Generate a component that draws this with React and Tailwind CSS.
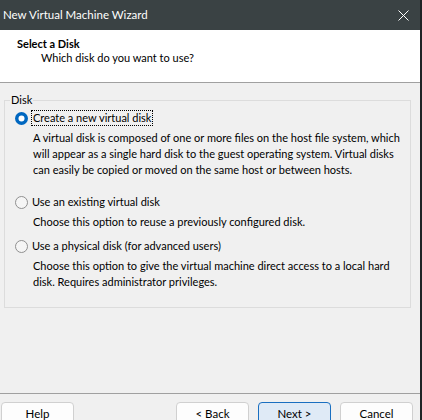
import React from 'react';

const font = { fontFamily: 'Lato, "Liberation Sans", sans-serif' };

function Radio({ checked }) {
    return (
        <svg width="13" height="13" viewBox="0 0 13 13" className="shrink-0">
            {checked ? (
                <>
                    <circle cx="6.5" cy="6.5" r="6.5" fill="#0067c0" />
                    <circle cx="6.5" cy="6.5" r="3" fill="#ffffff" />
                </>
            ) : (
                <circle cx="6.5" cy="6.5" r="6" fill="#f5f5f5" stroke="#8f8f8f" strokeWidth="1" />
            )}
        </svg>
    );
}

function Option({ label, checked, lines, className }) {
    return (
        <div className={className}>
            <div className="flex items-center h-[16px]">
                <Radio checked={checked} />
                <span
                    className={
                        checked
                            ? 'ml-[3px] px-[1px] leading-[14px] border border-dotted border-black'
                            : 'ml-[4px] leading-[16px]'
                    }
                >
                    {label}
                </span>
            </div>
            <div className="mt-[4px] ml-[18px] leading-[16px] whitespace-nowrap">
                {lines.map((l) => (
                    <div key={l}>{l}</div>
                ))}
            </div>
        </div>
    );
}

function Button({ children, primary }) {
    return (
        <button
            className={
                'w-[73px] h-[24px] rounded-[4px] border text-[11.5px] text-black flex items-center justify-center ' +
                (primary ? 'border-[#1a6fc0] bg-[#dfeaf6]' : 'border-[#d0d0d0] bg-[#fdfdfd]')
            }
        >
            {children}
        </button>
    );
}

export default function App() {
    return (
        <div className="w-[422px] h-[420px] bg-[#1f2325] overflow-hidden text-[11px] text-black" style={font}>
            <div className="w-[420px] h-[420px] flex flex-col bg-[#f0f0f0]">
                {/* Title bar */}
                <div className="h-[30px] bg-[#3a4244] flex items-center justify-between pl-[3px] pr-[11px] text-[11.5px] text-white">
                    <span>New Virtual Machine Wizard</span>
                    <svg width="11" height="11" viewBox="0 0 11 11">
                        <path d="M0.5 0.5 L10.5 10.5 M10.5 0.5 L0.5 10.5" stroke="#ffffff" strokeWidth="1" />
                    </svg>
                </div>

                {/* Header */}
                <div className="h-[53px] bg-white border-b border-[#a0a0a0] pl-[17px] pt-[7px] leading-[14px]">
                    <div className="font-bold">Select a Disk</div>
                    <div className="pl-[24px]">Which disk do you want to use?</div>
                </div>

                {/* Body */}
                <div className="flex-1 pl-[4px]">
                    <fieldset className="mt-[9px] w-[407px] border border-[#dcdcdc] pb-[17px]">
                        <legend className="ml-[5px] px-[1px] leading-[16px]">Disk</legend>
                        <div className="pl-[10px] pt-[2px]">
                            <Option
                                checked
                                label="Create a new virtual disk"
                                lines={[
                                    'A virtual disk is composed of one or more files on the host file system, which',
                                    'will appear as a single hard disk to the guest operating system. Virtual disks',
                                    'can easily be copied or moved on the same host or between hosts.',
                                ]}
                            />
                            <Option
                                className="mt-[16px]"
                                label="Use an existing virtual disk"
                                lines={['Choose this option to reuse a previously configured disk.']}
                            />
                            <Option
                                className="mt-[8px]"
                                label="Use a physical disk (for advanced users)"
                                lines={[
                                    'Choose this option to give the virtual machine direct access to a local hard',
                                    'disk. Requires administrator privileges.',
                                ]}
                            />
                        </div>
                    </fieldset>
                </div>

                {/* Footer */}
                <div className="h-[27px] shrink-0 border-t border-[#a0a0a0] pt-[8px] pl-[1px] pr-[7px] flex justify-between overflow-hidden">
                    <Button>Help</Button>
                    <div className="flex gap-[9px]">
                        <Button>&lt; Back</Button>
                        <Button primary>Next &gt;</Button>
                        <Button>Cancel</Button>
                    </div>
                </div>
            </div>
        </div>
    );
}
